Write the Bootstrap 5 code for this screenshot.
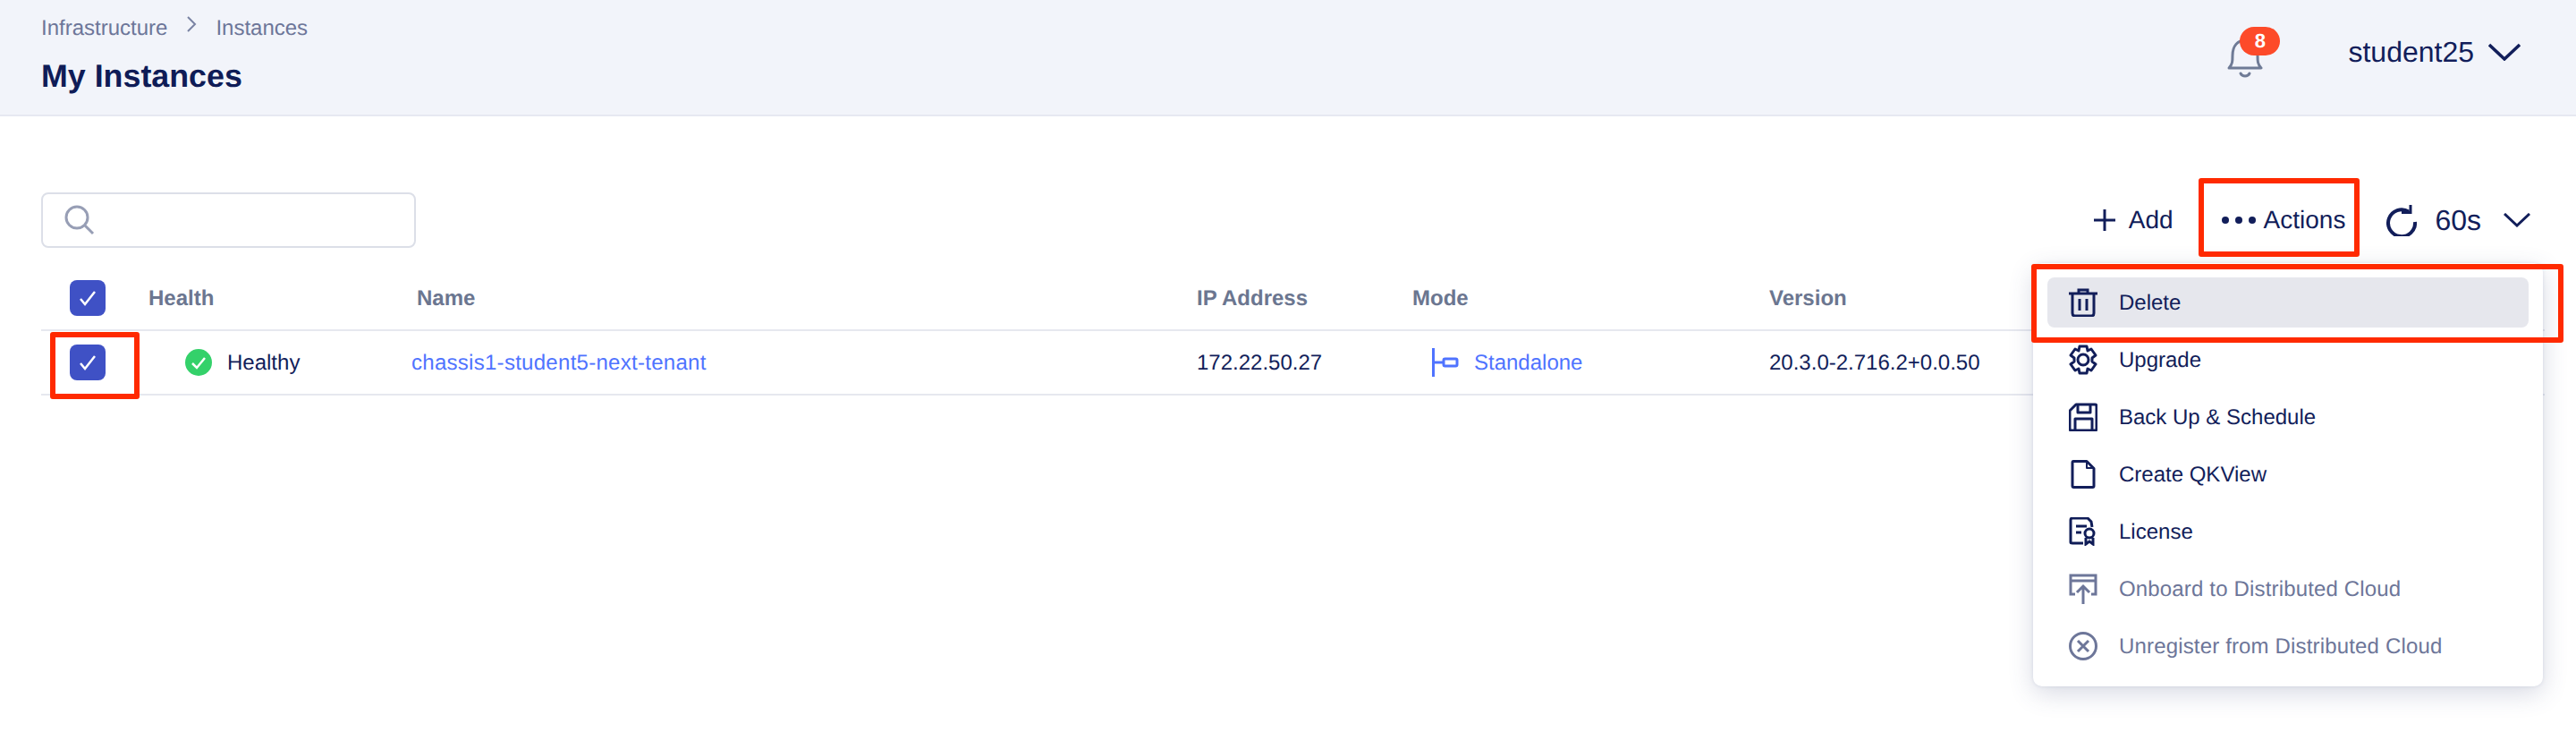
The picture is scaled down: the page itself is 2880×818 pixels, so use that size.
<!DOCTYPE html>
<html lang="en">
<head>
    <meta charset="UTF-8">
    <meta name="viewport" content="width=device-width, initial-scale=1.0">
    <title>My Instances</title>
    <link href="https://cdn.jsdelivr.net/npm/bootstrap@5.3.0/dist/css/bootstrap.min.css" rel="stylesheet">
    <style>
        body {
            font-family: "Liberation Sans", Arial, sans-serif;
            font-size: 24px;
            color: #121e5a;
            background: #fff;
            min-height: 818px;
            text-rendering: geometricPrecision;
        }
        .top-bar {
            height: 130px;
            padding: 16px 62px 0 46px;
            background: #f2f4fa;
            border-bottom: 2px solid #e6e8f1;
        }
        .crumbs {
            height: 30px;
            gap: 21px;
            color: #6d7699;
        }
        .crumbs span {
            padding-top: 2px;
        }
        .page-title {
            margin: 17px 0 0;
            font-size: 35.800px;
            line-height: 44px;
            font-weight: 700;
            color: #0f1c57;
        }
        .bell-box {
            position: relative;
            width: 40px;
            height: 44px;
            margin-top: 27px;
            margin-right: 95px;
        }
        .bell-count {
            position: absolute;
            top: -13px;
            left: 14px;
            width: 45px;
            height: 32px;
            border-radius: 16px;
            background: #fd4a29;
            color: #fff;
            font-size: 22px;
            font-weight: 700;
            line-height: 32px;
            text-align: center;
        }
        .user-name {
            height: 38px;
            margin-top: 23px;
            font-size: 32px;
            line-height: 38px;
            gap: 16px;
        }
        .work-area {
            position: relative;
            min-height: 688px;
            padding: 85px 35px 0 46px;
        }
        .search-box {
            width: 419px;
            height: 62px;
            padding-left: 24px;
            border: 2px solid #dcdfe8;
            border-radius: 8px;
        }
        .tool-bar {
            height: 62px;
            padding-right: 16px;
            font-size: 28px;
        }
        .tool-add {
            gap: 15px;
            margin-right: 54px;
        }
        .tool-actions {
            gap: 9px;
            margin-right: 46px;
        }
        .tool-refresh {
            font-size: 32px;
            gap: 20px;
        }
        .tool-refresh .refresh-chevron {
            margin-left: 5px;
        }
        .grid-table {
            width: 2799px;
            margin: 21px 0 0;
            table-layout: fixed;
            border-collapse: collapse;
        }
        .grid-table th, .grid-table td {
            padding: 0;
            vertical-align: middle;
            box-shadow: none;
            color: #121e5a;
            background: transparent;
        }
        .grid-table th {
            height: 71px;
            font-weight: 700;
            color: #6b7690;
            border-bottom: 2px solid #e6e8ef;
        }
        .grid-table td {
            height: 72px;
            border-bottom: 2px solid #e6e8ef;
        }
        .cell-text {
            display: inline-block;
            padding-top: 2px;
        }
        .col-check { width: 120px; }
        .col-health { width: 294px; }
        .col-name { width: 878px; }
        .col-ip { width: 241px; }
        .col-mode { width: 399px; }
        .pick-box {
            display: flex;
            align-items: center;
            justify-content: center;
            width: 40px;
            height: 40px;
            margin-left: 32px;
            border-radius: 8px;
            background: #3f51c5;
        }
        .name-head {
            padding-left: 6px !important;
        }
        .health-cell {
            gap: 17px;
            padding-left: 41px;
        }
        .grid-link {
            color: #4f73ff;
            text-decoration: none;
        }
        .name-link {
            letter-spacing: .28px;
        }
        .mode-cell {
            gap: 17px;
            padding-left: 22px;
        }
        .action-menu.dropdown-menu {
            position: absolute;
            top: 164px;
            right: 37px;
            width: 570px;
            height: 473px;
            padding: 16px;
            border: 0;
            border-radius: 10px;
            box-shadow: 0 0 4px rgba(60, 70, 120, .12), 0 8px 28px rgba(60, 70, 120, .2);
            font-size: 24px;
            z-index: 5;
        }
        .action-menu .dropdown-item {
            display: flex;
            align-items: center;
            gap: 24px;
            height: 56px;
            margin-bottom: 8px;
            padding: 0 0 0 24px;
            border-radius: 8px;
            color: #121e5a;
        }
        .action-menu .dropdown-item span {
            padding-top: 2px;
        }
        .action-menu .dropdown-item.active-row {
            background: #e6e7ed;
        }
        .action-menu .dropdown-item.off-row {
            color: #6d7699;
            letter-spacing: .16px;
        }
        .red-frame {
            position: absolute;
            border: 6px solid #ff2a00;
            border-radius: 3px;
            z-index: 6;
            pointer-events: none;
        }
        .frame-actions {
            top: 69px;
            left: 2458px;
            width: 180px;
            height: 88px;
        }
        .frame-delete {
            top: 165px;
            left: 2271px;
            width: 595px;
            height: 88px;
        }
        .frame-check {
            top: 241px;
            left: 56px;
            width: 100px;
            height: 75px;
        }
    </style>
</head>
<body>
    <header class="top-bar d-flex justify-content-between">
        <div>
            <div class="crumbs d-flex align-items-center">
                <span>Infrastructure</span>
                <svg width="12" height="18" viewBox="0 0 12 18" fill="none" stroke="#7a83a3" stroke-width="2" class="mb-2"><path d="M2 1l8 8-8 8"/></svg>
                <span>Instances</span>
            </div>
            <h1 class="page-title">My Instances</h1>
        </div>
        <div class="d-flex align-items-start">
            <div class="bell-box">
                <svg width="40" height="44" viewBox="0 0 40 44" fill="none" stroke="#6f7b96" stroke-width="3">
                    <path d="M2 33c4-4 4-8 4-14C6 8 12 2 20 2s14 6 14 17c0 6 0 10 4 14z" stroke-linejoin="round"/>
                    <path d="M15 39c2 4 8 4 10 0" stroke-linecap="round"/>
                </svg>
                <span class="bell-count">8</span>
            </div>
            <div class="user-name d-flex align-items-center">
                <span>student25</span>
                <svg width="36" height="20" viewBox="0 0 36 20" fill="none" stroke="#121e5a" stroke-width="3.500"><path d="M1 2l17 16L35 2"/></svg>
            </div>
        </div>
    </header>

    <main class="work-area">
        <div class="d-flex justify-content-between">
            <div class="search-box d-flex align-items-center">
                <svg width="34" height="34" viewBox="0 0 34 34" fill="none" stroke="#979eb5" stroke-width="3"><circle cx="14" cy="14" r="12"/><path d="M23 23l9 9"/></svg>
            </div>
            <div class="tool-bar d-flex align-items-center">
                <div class="tool-add d-flex align-items-center">
                    <svg width="24" height="24" viewBox="0 0 24 24" fill="none" stroke="#121e5a" stroke-width="3"><path d="M12 0v24M0 12h24"/></svg>
                    <span>Add</span>
                </div>
                <div class="tool-actions d-flex align-items-center">
                    <svg width="38" height="10" viewBox="0 0 38 10" fill="#121e5a"><circle cx="4" cy="5" r="4"/><circle cx="19" cy="5" r="4"/><circle cx="34" cy="5" r="4"/></svg>
                    <span>Actions</span>
                </div>
                <div class="tool-refresh d-flex align-items-center">
                    <svg width="34" height="36" viewBox="0 0 34 36" fill="none" stroke="#121e5a" stroke-width="4"><path d="M25 8.500A15 15 0 1 0 32 20"/><path d="M27 1v8.500H17" stroke-width="3"/></svg>
                    <span>60s</span>
                    <svg class="refresh-chevron" width="30" height="16" viewBox="0 0 30 16" fill="none" stroke="#121e5a" stroke-width="3"><path d="M1 1l14 13L29 1"/></svg>
                </div>
            </div>
        </div>

        <table class="table grid-table">
            <thead>
                <tr>
                    <th class="col-check"><span class="pick-box"><svg width="20" height="18" viewBox="0 0 20 18" fill="none" stroke="#fff" stroke-width="2.500"><path d="M2 10l5 6L18 2"/></svg></span></th>
                    <th class="col-health"><span class="cell-text">Health</span></th>
                    <th class="col-name name-head"><span class="cell-text">Name</span></th>
                    <th class="col-ip"><span class="cell-text">IP Address</span></th>
                    <th class="col-mode"><span class="cell-text">Mode</span></th>
                    <th><span class="cell-text">Version</span></th>
                </tr>
            </thead>
            <tbody>
                <tr>
                    <td><span class="pick-box"><svg width="20" height="18" viewBox="0 0 20 18" fill="none" stroke="#fff" stroke-width="2.500"><path d="M2 10l5 6L18 2"/></svg></span></td>
                    <td>
                        <div class="health-cell d-flex align-items-center">
                            <svg width="30" height="30" viewBox="0 0 30 30"><circle cx="15" cy="15" r="15" fill="#34d16a"/><path d="M8 16l5 5 9-11" fill="none" stroke="#fff" stroke-width="2.500"/></svg>
                            <span class="cell-text">Healthy</span>
                        </div>
                    </td>
                    <td><a class="grid-link name-link cell-text" href="#">chassis1-student5-next-tenant</a></td>
                    <td><span class="cell-text">172.22.50.27</span></td>
                    <td>
                        <div class="mode-cell d-flex align-items-center">
                            <svg width="30" height="32" viewBox="0 0 30 32" fill="none" stroke="#4f73ff" stroke-width="3"><path d="M1.500 0v32M2 16h10"/><rect x="13" y="12" width="15" height="8" rx="1.500"/></svg>
                            <a class="grid-link cell-text" href="#">Standalone</a>
                        </div>
                    </td>
                    <td><span class="cell-text">20.3.0-2.716.2+0.0.50</span></td>
                </tr>
            </tbody>
        </table>

        <div class="dropdown-menu show action-menu">
            <a class="dropdown-item active-row" href="#">
                <svg width="32" height="32" viewBox="0 0 32 32" fill="none" stroke="#121e5a" stroke-width="3"><path d="M0 6h32M11 6V2h10v4M4 6v22q0 3 3 3h18q3 0 3-3V6M12 12v13M20 12v13"/></svg>
                <span>Delete</span>
            </a>
            <a class="dropdown-item" href="#">
                <svg width="32" height="34" viewBox="0 0 32 34" fill="none" stroke="#121e5a" stroke-width="3" stroke-linejoin="round"><circle cx="16" cy="17" r="6"/><path d="M12 2h8l1 5 4-2 5 7-4 3v4l4 3-5 7-4-2-1 5h-8l-1-5-4 2-5-7 4-3v-4L2 12l5-7 4 2z"/></svg>
                <span>Upgrade</span>
            </a>
            <a class="dropdown-item" href="#">
                <svg width="32" height="32" viewBox="0 0 32 32" fill="none" stroke="#121e5a" stroke-width="3" stroke-linejoin="round"><path d="M8 2h21q2 0 2 2v25q0 2-2 2H3q-2 0-2-2V9z"/><path d="M10 2v9h14V2M7 31V18h19v13"/></svg>
                <span>Back Up &amp; Schedule</span>
            </a>
            <a class="dropdown-item" href="#">
                <svg width="32" height="32" viewBox="0 0 32 32" fill="none" stroke="#121e5a" stroke-width="3" stroke-linejoin="round"><path d="M5 1.500h15l8 8V29q0 1.500-1.500 1.500h-21Q4 30.500 4 29V3q0-1.500 1-1.500z"/><path d="M20 2v7h7" stroke-width="2"/></svg>
                <span>Create QKView</span>
            </a>
            <a class="dropdown-item" href="#">
                <svg width="32" height="32" viewBox="0 0 32 32" fill="none" stroke="#0f1c57" stroke-width="3"><path d="M26 11l-1-6-4-4H4Q2 1 2 3v25q0 1 2 1h12"/><path d="M8 10h12M8 17h6"/><circle cx="23" cy="18" r="5"/><path d="M19 23v7l4-3 4 3v-7"/></svg>
                <span>License</span>
            </a>
            <a class="dropdown-item off-row" href="#">
                <svg width="32" height="34" viewBox="0 0 32 34" fill="none" stroke="#6d7699" stroke-width="3"><path d="M7 23H2V2h28v21h-5M2 8h28M16 34V15M9 21l7-7 7 7"/></svg>
                <span>Onboard to Distributed Cloud</span>
            </a>
            <a class="dropdown-item off-row" href="#">
                <svg width="32" height="32" viewBox="0 0 32 32" fill="none" stroke="#6d7699" stroke-width="3"><circle cx="16" cy="16" r="14.500"/><path d="M10 10l12 12M22 10L10 22"/></svg>
                <span>Unregister from Distributed Cloud</span>
            </a>
        </div>

        <div class="red-frame frame-actions"></div>
        <div class="red-frame frame-delete"></div>
        <div class="red-frame frame-check"></div>
    </main>

    <script src="https://cdn.jsdelivr.net/npm/bootstrap@5.3.0/dist/js/bootstrap.bundle.min.js"></script>
</body>
</html>
